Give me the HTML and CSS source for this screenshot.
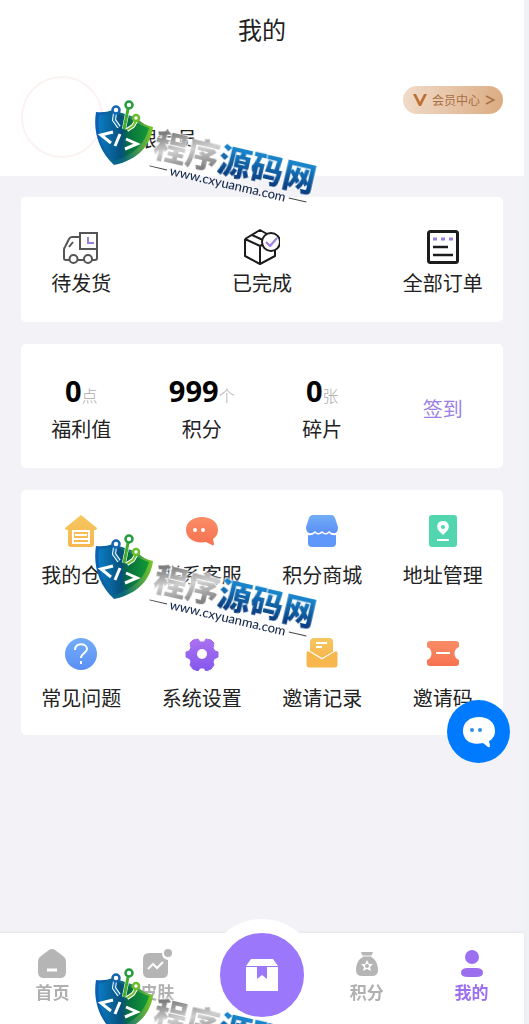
FILE: index.html
```html
<!DOCTYPE html>
<html lang="zh-CN">
<head>
    <meta charset="UTF-8">
    <meta name="viewport" content="width=device-width, initial-scale=1.0">
    <title>我的</title>
    <link rel="stylesheet" href="styles.css">
</head>
<body>
    <div class="app">
        <header class="header">
            <h1>我的</h1>
            <div class="profile">
                <div class="avatar"></div>
                <span class="nickname">白银会员</span>
                <a href="#vip" class="vip">
                    <svg width="14" height="12" viewBox="0 0 14 12"><path d="M0 0h3l4 8 4-8h3L8 12H6z" fill="#bd7031"/></svg>
                    <span>会员中心</span>
                    <svg width="10" height="10" viewBox="0 0 10 10"><path d="M1 1l8 4-8 4" fill="none" stroke="#a86f42" stroke-width="1.500"/></svg>
                </a>
            </div>
        </header>

        <main class="content">
            <section class="card orders">
                <a href="#pending">
                    <svg width="36" height="36" viewBox="0 0 36 36" fill="none" stroke="#555" stroke-width="2">
                        <path d="M6 31H3q-2 0-2-2v-8q0-2 1-3l4-8q1-2 3-2h8M14 31h7M29 31h3q2 0 2-2v-9"/>
                        <path d="M17 4h17v16H17zM6 18l4-5"/>
                        <circle cx="10.500" cy="30" r="4"/><circle cx="25" cy="30" r="4"/>
                        <path d="M25 8v6h6" stroke="#9a7fe0"/>
                    </svg>
                    <span>待发货</span>
                </a>
                <a href="#done">
                    <svg width="36" height="36" viewBox="0 0 36 36" fill="none" stroke="#1c1c1c" stroke-width="2" stroke-linejoin="round">
                        <path d="M1 10L16 1l7 4M1 10l15 7 6-3M1 10v17l15 8 15-8V18M16 17v18M8 6l15 7"/>
                        <circle cx="27" cy="13" r="9" fill="#fff"/>
                        <path d="M22 13l4 4 7-8" stroke="#9a7fe0"/>
                    </svg>
                    <span>已完成</span>
                </a>
                <a href="#orders">
                    <svg width="36" height="36" viewBox="0 0 36 36" fill="none" stroke="#1c1c1c" stroke-width="3">
                        <rect x="3.500" y="2.500" width="29" height="31" rx="2"/>
                        <path d="M8 18h15M8 26h20" stroke-width="2.500"/>
                        <path d="M8 10h4M16 10h4M24 10h4" stroke="#9a7fe0"/>
                    </svg>
                    <span>全部订单</span>
                </a>
            </section>

            <section class="card stats">
                <div class="stat">
                    <p class="amount"><b>0</b><small>点</small></p>
                    <p>福利值</p>
                </div>
                <div class="stat">
                    <p class="amount"><b>999</b><small>个</small></p>
                    <p>积分</p>
                </div>
                <div class="stat">
                    <p class="amount"><b>0</b><small>张</small></p>
                    <p>碎片</p>
                </div>
                <button type="button" class="sign">签到</button>
            </section>

            <section class="card menu">
                <a href="#store">
                    <svg width="34" height="34" viewBox="0 0 34 34">
                        <path d="M17 1l16 13q0 2-3 2v14q0 3-3 3H7q-3 0-3-3V16q-3 0-3-2z" fill="url(#yellow)"/>
                        <path d="M9 30V17h16v13M11 21h12M9 25h16M9 29h16" fill="none" stroke="#fff" stroke-width="2"/>
                    </svg>
                    <span>我的仓库</span>
                </a>
                <a href="#service">
                    <svg width="34" height="34" viewBox="0 0 34 34">
                        <path d="M17 3c9 0 16 5 16 13 0 4-2 7-5 9l1 5q0 2-2 1l-6-3C9 30 1 24 1 16 1 8 8 3 17 3z" fill="url(#red)"/>
                        <circle cx="10" cy="16" r="2" fill="#fff"/><circle cx="18" cy="16" r="2" fill="#fff"/>
                    </svg>
                    <span>联系客服</span>
                </a>
                <a href="#mall">
                    <svg width="34" height="34" viewBox="0 0 34 34">
                        <path d="M3 21q4 1 7-2 3 3 7 0 4 3 7 0 3 3 7 2v8q0 4-4 4H7q-4 0-4-4z" fill="#6097fb"/>
                        <path d="M8 1h18q3 0 4 3l3 9q0 7-5 6-2 0-4-2-3 4-7 0-4 4-7 0-3 3-6 2-3-1-3-6L4 4q1-3 4-3z" fill="url(#blue)"/>
                    </svg>
                    <span>积分商城</span>
                </a>
                <a href="#address">
                    <svg width="34" height="34" viewBox="0 0 34 34">
                        <rect x="3" y="1" width="28" height="32" rx="3" fill="#52d6b0"/>
                        <path d="M17 21l-4-4c-4-5-1-10 4-10s8 5 4 10z" fill="#fff"/>
                        <circle cx="17" cy="13" r="2" fill="#52d6b0"/>
                        <path d="M11 26h12" stroke="#fff" stroke-width="2"/>
                    </svg>
                    <span>地址管理</span>
                </a>
                <a href="#faq">
                    <svg width="34" height="34" viewBox="0 0 34 34">
                        <circle cx="17" cy="17" r="16" fill="url(#blue)"/>
                        <path d="M11 13c0-8 12-7 12-1 0 4-6 4-6 9M17 24v3" fill="none" stroke="#fff" stroke-width="2"/>
                    </svg>
                    <span>常见问题</span>
                </a>
                <a href="#settings">
                    <svg width="34" height="34" viewBox="0 0 34 34">
                        <path d="M8 3l5-1 2 3h4l2-3 5 1 3 3-1 5 2 3 3 1v5l-4 2-1 3 1 3-3 4-5 2-2-3h-4l-2 3-5-2-3-4 1-3-1-3-4-2v-5l3-1 2-3-1-5z" fill="url(#purple)" stroke="url(#purple)" stroke-width="1" stroke-linejoin="round"/>
                        <circle cx="17" cy="17" r="5" fill="#fff"/>
                    </svg>
                    <span>系统设置</span>
                </a>
                <a href="#records">
                    <svg width="34" height="34" viewBox="0 0 34 34">
                        <path d="M5 14V5q0-4 4-4h15q4 0 4 4v10l-11 6z" fill="url(#yellow)"/>
                        <path d="M11 6h11M11 10h6" stroke="#fff" stroke-width="2"/>
                        <path d="M1 16q0-3 3-2l13 8 13-8q3-1 3 2v12q0 3-3 3H4q-3 0-3-3z" fill="#f8b64f" stroke="#fff" stroke-width="1"/>
                    </svg>
                    <span>邀请记录</span>
                </a>
                <a href="#invite">
                    <svg width="34" height="34" viewBox="0 0 34 34">
                        <path d="M4 4h26q3 0 3 3v3c-6 2-6 11 0 13v3q0 3-3 3H4q-3 0-3-3v-3c6-2 6-11 0-13V7q0-3 3-3z" fill="url(#red)"/>
                        <path d="M10 16h14" stroke="#fff" stroke-width="2"/>
                    </svg>
                    <span>邀请码</span>
                </a>
            </section>
        </main>

        <nav class="tabbar">
            <a href="#home">
                <svg width="32" height="32" viewBox="0 0 32 32">
                    <path d="M13 2q3-2 6 0l8 6q3 2 3 6v10q0 6-6 6H8q-6 0-6-6V14q0-4 3-6z" fill="#b5b5b5"/>
                    <path d="M11 22h10" stroke="#fff" stroke-width="3"/>
                </svg>
                <span>首页</span>
            </a>
            <a href="#skin">
                <svg width="32" height="32" viewBox="0 0 32 32">
                    <path d="M8 5h13q0 6 6 7v12q0 6-6 6H8q-6 0-6-6V11q0-6 6-6z" fill="#b5b5b5"/>
                    <circle cx="27" cy="5" r="4" fill="#b5b5b5"/>
                    <path d="M7 21l5-5 4 4 6-6" fill="none" stroke="#fff" stroke-width="2"/>
                </svg>
                <span>皮肤</span>
            </a>
            <a href="#box" class="center" aria-label="盒子">
                <span class="box">
                    <svg width="34" height="34" viewBox="0 0 34 34">
                        <path d="M6 1h22l5 7H1zM1 9h32v24H1z" fill="#fff"/>
                        <path d="M12 9h10v12l-5-4-5 4z" fill="#9b78fb"/>
                    </svg>
                </span>
            </a>
            <a href="#points">
                <svg width="32" height="32" viewBox="0 0 32 32">
                    <path d="M10 4h12l-2 5c5 2 7 8 7 13q0 6-6 6H11q-6 0-6-6c0-5 2-11 7-13z" fill="#b5b5b5"/>
                    <path d="M11 8h10" stroke="#fff" stroke-width="1"/>
                    <path d="M16 12l2 4h4l-3 3 1 4-4-2-4 2 1-4-3-3h4z" fill="#fff"/>
                    <circle cx="16" cy="18" r="2" fill="#b5b5b5"/>
                </svg>
                <span>积分</span>
            </a>
            <a href="#mine" class="active">
                <svg width="32" height="32" viewBox="0 0 32 32" fill="#9b6ff0">
                    <circle cx="16" cy="9" r="7"/>
                    <path d="M12 20h8q7 0 7 4.500T20 29h-8q-7 0-7-4.500T12 20z"/>
                </svg>
                <span>我的</span>
            </a>
        </nav>

        <div class="watermarks">
            <div class="watermark">
                <svg width="60" height="66" viewBox="0 0 60 66"><use href="#shield"/></svg>
                <div class="brand">
                    <p class="brand-name"><span class="silver">程序</span><span class="blue">源码网</span></p>
                    <p class="brand-url">www.cxyuanma.com</p>
                </div>
            </div>
            <div class="watermark">
                <svg width="60" height="66" viewBox="0 0 60 66"><use href="#shield"/></svg>
                <div class="brand">
                    <p class="brand-name"><span class="silver">程序</span><span class="blue">源码网</span></p>
                    <p class="brand-url">www.cxyuanma.com</p>
                </div>
            </div>
            <div class="watermark">
                <svg width="60" height="66" viewBox="0 0 60 66"><use href="#shield"/></svg>
                <div class="brand">
                    <p class="brand-name"><span class="silver">程序</span><span class="blue">源码网</span></p>
                    <p class="brand-url">www.cxyuanma.com</p>
                </div>
            </div>
        </div>
    </div>

    <button type="button" class="chat" aria-label="客服">
        <svg width="34" height="34" viewBox="0 0 34 34">
            <path d="M17 2c9 0 16 5 16 14 0 4-2 8-6 10l1 5q0 2-2 1l-5-4C9 31 1 25 1 16 1 7 8 2 17 2z" fill="#fff"/>
            <circle cx="10" cy="15" r="2" fill="#2f8fe8"/><circle cx="18" cy="15" r="2" fill="#2f8fe8"/>
        </svg>
    </button>

    <!-- shared gradients and the shield logo -->
    <svg class="defs" width="0" height="0">
        <defs>
            <linearGradient id="yellow" x2="0" y2="1"><stop stop-color="#f5c75f"/><stop offset="1" stop-color="#f8b64f"/></linearGradient>
            <linearGradient id="red" x2="0" y2="1"><stop stop-color="#f98d67"/><stop offset="1" stop-color="#f7714f"/></linearGradient>
            <linearGradient id="blue" x2="0" y2="1"><stop stop-color="#72adf8"/><stop offset="1" stop-color="#5b8ff5"/></linearGradient>
            <linearGradient id="purple" x2="0" y2="1"><stop stop-color="#ab70ee"/><stop offset="1" stop-color="#8458ee"/></linearGradient>
            <linearGradient id="rim" x2="1" y2="0"><stop stop-color="#0a5fb8"/><stop offset="0.500" stop-color="#0b6a78"/><stop offset="1" stop-color="#7cc821"/></linearGradient>
            <linearGradient id="face" x2="1" y2="0"><stop stop-color="#0b7cc4"/><stop offset="0.450" stop-color="#06507c"/><stop offset="0.600" stop-color="#08703f"/><stop offset="1" stop-color="#139a35"/></linearGradient>
            <symbol id="shield" viewBox="0 0 60 66">
                <path d="M1 12q9 1 17-2l24 8q6 7 16 9c-2 17-14 33-39 38C3 50-2 30 1 12z" fill="url(#rim)"/>
                <path d="M4 15q8 0 14-3l22 9q6 5 14 7c-4 15-15 27-35 33C6 48 2 31 4 15z" fill="url(#face)"/>
                <g fill="none" stroke="#fff" stroke-width="4"><path d="M20 13l-1 7 5 7M33 9l-4 20M41 21l-3 5-6 4"/></g>
                <g fill="none" stroke-width="2">
                    <path d="M20 13l-1 7 5 7" stroke="#1476bd"/>
                    <path d="M33 9l-4 20" stroke="#43ad2e" stroke-width="3"/>
                    <path d="M41 21l-3 5-6 4" stroke="#70bd28"/>
                </g>
                <g fill="#fff" stroke-width="2.500">
                    <circle cx="21" cy="10" r="3.500" stroke="#1464b4"/>
                    <circle cx="34" cy="5" r="3.500" stroke="#229b3b"/>
                    <circle cx="41" cy="18" r="3" stroke="#6abd2a"/>
                </g>
                <path d="M18 32L6 35l10 8M25 34l-5 12M31 39l11 5-12 5" fill="none" stroke="#fff" stroke-width="3"/>
            </symbol>
        </defs>
    </svg>
</body>
</html>
```
FILE: styles.css
```css
* {
    box-sizing: border-box;
}
body {
    font-family: "Noto Sans", "Noto Sans CJK SC", sans-serif;
    margin: 0;
    background-color: #eff2f4;
    color: #222;
}
h1, p {
    margin: 0;
}
a {
    color: inherit;
    text-decoration: none;
}
button {
    border: none;
    padding: 0;
    font-family: inherit;
    cursor: pointer;
}
.app {
    position: relative;
    display: flex;
    flex-direction: column;
    min-height: 100vh;
    margin-right: 5px;
    background-color: #f3f2f6;
}
.header {
    background-color: #fff;
    padding: 12px 21px 18px;
}
.header h1 {
    font-size: 24px;
    font-weight: 400;
    line-height: 36px;
    text-align: center;
}
.profile {
    display: flex;
    align-items: flex-start;
    margin-top: 28px;
}
.avatar {
    width: 82px;
    height: 82px;
    border: 2px solid #faf3f1;
    border-radius: 50%;
}
.nickname {
    margin: 48px auto 0 14px;
    font-size: 20px;
    line-height: 32px;
}
.vip {
    display: flex;
    align-items: center;
    gap: 5px;
    height: 28px;
    margin-top: 10px;
    padding: 0 8px 0 10px;
    border-radius: 14px;
    background: linear-gradient(100deg, #f1dccb, #dbab80);
    color: #a86f42;
    font-size: 12px;
}

/* cards */
.content {
    flex: 1;
    display: flex;
    flex-direction: column;
    gap: 22px;
    padding: 21px;
}
.card {
    background-color: #fff;
    border-radius: 5px;
    font-size: 20px;
    line-height: 32px;
    text-align: center;
}
.orders {
    display: flex;
    justify-content: space-between;
    padding: 32px 0 22px;
}
.orders a {
    display: flex;
    flex-direction: column;
    align-items: center;
    gap: 3px;
    width: 25%;
}
.stats {
    display: grid;
    grid-template-columns: repeat(4, 1fr);
    padding: 27px 0 22px;
}
.stat {
    display: flex;
    flex-direction: column;
    gap: 3px;
}
.amount {
    height: 40px;
    line-height: 40px;
}
.amount b {
    color: #000;
    font-size: 29px;
}
.amount small {
    color: #aaa;
    font-size: 16px;
    font-weight: 300;
}
.sign {
    background: none;
    color: #9b7fe6;
    font-size: 20px;
}
.menu {
    display: grid;
    grid-template-columns: repeat(4, 1fr);
    row-gap: 45px;
    padding: 24px 0 20px;
}
.menu a {
    display: flex;
    flex-direction: column;
    align-items: center;
    gap: 12px;
}

/* bottom bar */
.tabbar {
    position: sticky;
    bottom: 0;
    display: grid;
    grid-template-columns: repeat(5, minmax(0, 1fr));
    height: 91px;
    background-color: #fff;
    box-shadow: 0 -1px 3px rgba(0, 0, 0, 0.06);
}
.tabbar a {
    display: flex;
    flex-direction: column;
    align-items: center;
    gap: 1px;
    padding-top: 15px;
    color: #b0b0b0;
    font-size: 17px;
    font-weight: bold;
    line-height: 24px;
}
.tabbar .active {
    color: #9b6ff0;
}
.tabbar .center {
    padding: 0;
}
.box {
    display: flex;
    align-items: center;
    justify-content: center;
    flex: none;
    width: 112px;
    height: 112px;
    margin-top: -14px;
    border: 14px solid #fff;
    border-radius: 50%;
    background-color: #9b78fb;
}
.chat {
    position: fixed;
    right: 19px;
    bottom: 261px;
    display: flex;
    align-items: center;
    justify-content: center;
    width: 63px;
    height: 63px;
    border-radius: 50%;
    background-color: #007bff;
}

/* watermark layer over the page */
.watermarks {
    position: absolute;
    inset: 0;
    overflow: hidden;
    padding: 100px 0 0 95px;
    pointer-events: none;
}
.watermark {
    display: flex;
    align-items: flex-start;
    height: 434px;
}
.brand {
    margin-top: 25px;
    transform: rotate(13deg);
    transform-origin: 0 17px;
}
.brand-name {
    font-family: "Noto Sans CJK SC", sans-serif;
    font-size: 33px;
    font-weight: 900;
    line-height: 34px;
    filter: drop-shadow(0 0 1px #fff) drop-shadow(0 0 1px #fff);
}
.brand-name span {
    background-clip: text;
    -webkit-background-clip: text;
    color: transparent;
}
.silver {
    background-image: linear-gradient(160deg, #777 20%, #d0d0d0 50%, #808080 80%);
}
.blue {
    background-image: linear-gradient(#1a86cc 25%, #0a3f82 80%);
}
.brand-url {
    display: flex;
    align-items: center;
    justify-content: center;
    gap: 3px;
    margin-right: 20px;
    color: #15294d;
    font-family: Lato, sans-serif;
    font-size: 13px;
    font-weight: 500;
    line-height: 14px;
}
.brand-url::before,
.brand-url::after {
    content: "";
    width: 18px;
    height: 1px;
    background-color: #444;
}
.defs {
    position: absolute;
}
```
